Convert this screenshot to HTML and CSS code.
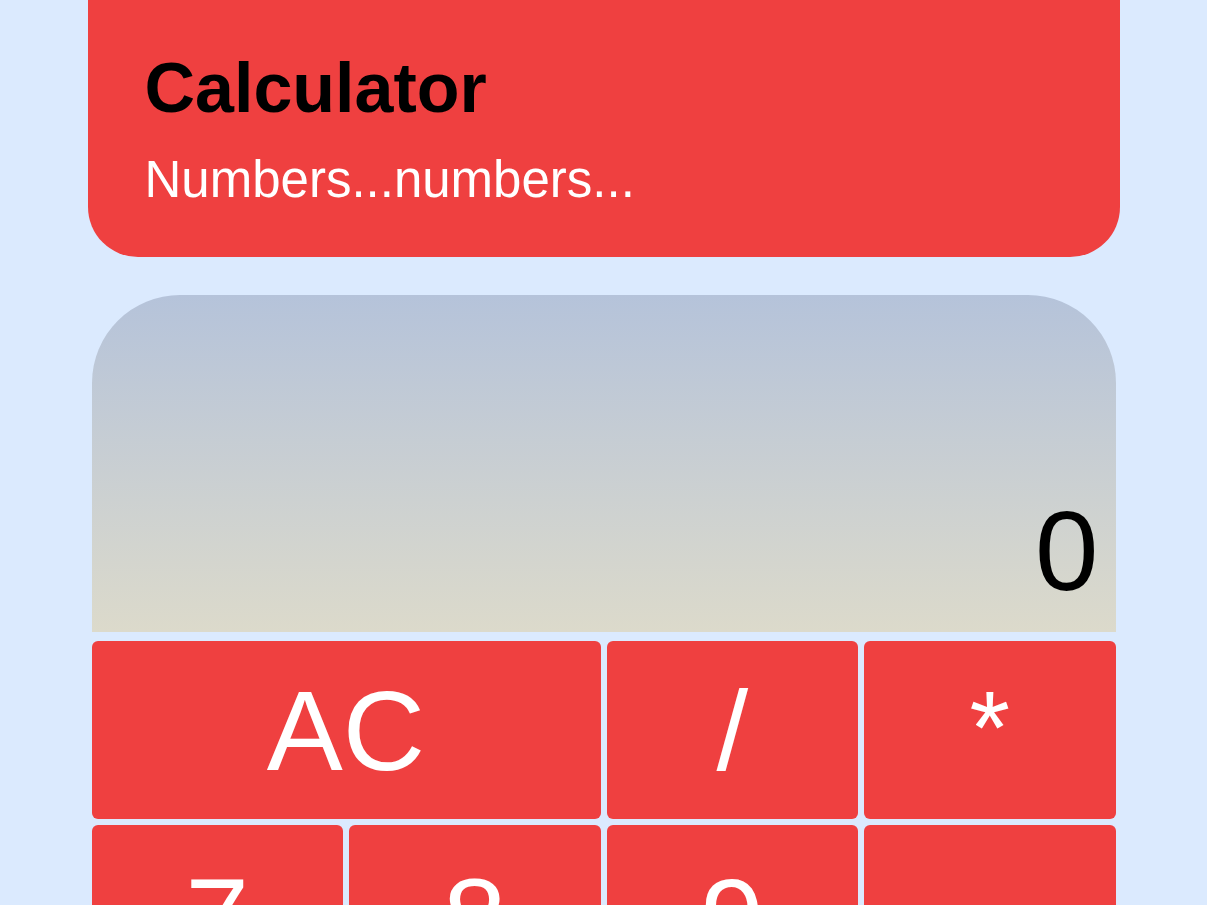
FILE: index.html
```html
<!DOCTYPE html>
<html lang="en">
<head>
<meta charset="utf-8">
<title>Calculator</title>
<link rel="stylesheet" href="styles.css">
</head>
<body>
<header class="hero">
  <h1 class="hero-title">Calculator</h1>
  <p class="hero-sub">Numbers...numbers...</p>
</header>
<main class="calc">
  <div class="display"><span class="display-value">0</span></div>
  <div class="keys">
    <button class="key key-wide">AC</button>
    <button class="key">/</button>
    <button class="key key-star">*</button>
    <button class="key">7</button>
    <button class="key">8</button>
    <button class="key">9</button>
    <button class="key">-</button>
    <button class="key">4</button>
    <button class="key">5</button>
    <button class="key">6</button>
    <button class="key">+</button>
    <button class="key">1</button>
    <button class="key">2</button>
    <button class="key">3</button>
    <button class="key">=</button>
    <button class="key key-wide">0</button>
    <button class="key">.</button>
  </div>
</main>
</body>
</html>
```

FILE: styles.css
```css
html, body {
  margin: 0;
  padding: 0;
}
body {
  background: #dbeafe;
  font-family: "Liberation Sans", Arial, Helvetica, sans-serif;
}
.hero {
  width: 1032px;
  box-sizing: border-box;
  margin: 0 auto;
  padding: 48px 54px 48px 57px;
  background: #ef4040;
  border-radius: 0 0 50px 50px;
}
.hero-title {
  margin: 0;
  font-size: 70px;
  font-weight: 700;
  line-height: normal;
  color: #000;
}
.hero-sub {
  margin: 22px 0 0;
  font-size: 51px;
  line-height: normal;
  color: #fff;
}
.calc {
  width: 1024px;
  margin: 38px auto 0;
}
.display {
  height: 337px;
  box-sizing: border-box;
  padding: 0 17px 16px;
  border-radius: 88px 88px 0 0;
  background: linear-gradient(to bottom, #b5c3da, #dcdacb);
  display: flex;
  align-items: flex-end;
  justify-content: flex-end;
}
.display-value {
  font-size: 114px;
  line-height: normal;
  color: #000;
}
.keys {
  margin-top: 9px;
  display: grid;
  grid-template-columns: repeat(4, 1fr);
  grid-template-rows: 178px;
  grid-auto-rows: 186px;
  gap: 6px;
}
.key {
  border: 0;
  margin: 0;
  padding: 0;
  border-radius: 6px;
  background: #ef4040;
  color: #fff;
  font-family: inherit;
  font-size: 114px;
  line-height: normal;
  display: flex;
  align-items: center;
  justify-content: center;
}
.key-star {
  font-size: 104px;
  padding-bottom: 4px;
}
.key-wide {
  grid-column: span 2;
}
```
